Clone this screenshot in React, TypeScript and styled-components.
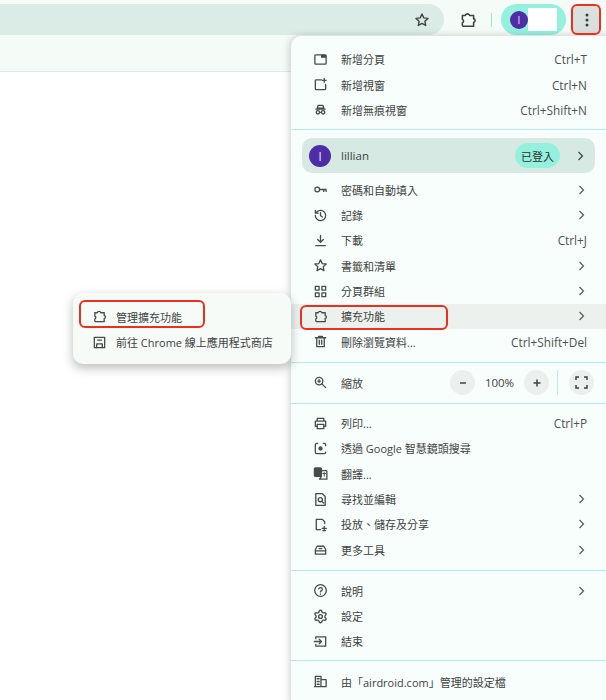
import React from "react";
import styled, { createGlobalStyle } from "styled-components";
import { Settings } from "lucide-react";

const Global = createGlobalStyle`
  html, body { margin: 0; padding: 0; background: #fff; }
  body { font-family: "Open Sans", "Noto Sans CJK TC", sans-serif; }
  #root { width: 606px; height: 700px; overflow: hidden; position: relative; }
`;

const Page = styled.div`
  position: relative;
  width: 606px;
  height: 700px;
  overflow: hidden;
  background: #fff;
`;
const Toolbar = styled.header`
  height: 67px;
  padding-top: 4px;
  background: #f5fbf7;
  border-bottom: 1px solid #dcebe6;
`;
const TopRow = styled.div`
  display: flex;
  align-items: center;
  height: 31px;
`;
const Address = styled.div`
  width: 444px;
  height: 31px;
  flex: none;
  display: flex;
  align-items: center;
  justify-content: flex-end;
  padding-right: 14px;
  box-sizing: border-box;
  background: #dbece7;
  border-radius: 0 16px 16px 0;
  color: #3c4442;
`;
const IconSlot = styled.div`
  width: 24px;
  height: 24px;
  margin-left: 12px;
  display: flex;
  align-items: center;
  justify-content: center;
  color: #3c4442;
`;
const VDivider = styled.div`
  width: 1px;
  height: 14px;
  margin-left: 11px;
  background: #96e8d8;
`;
const Profile = styled.div`
  width: 65px;
  height: 31px;
  margin-left: 9px;
  flex: none;
  display: flex;
  align-items: center;
  padding-left: 9px;
  box-sizing: border-box;
  border-radius: 16px;
  background: #96f0de;
`;
const Avatar = styled.div<{ $size: number }>`
  width: ${(p) => p.$size}px;
  height: ${(p) => p.$size}px;
  flex: none;
  display: flex;
  align-items: center;
  justify-content: center;
  border-radius: 50%;
  background: #4f2da6;
  color: #e6dcf8;
  font-family: "Open Sans", sans-serif;
  font-size: ${(p) => Math.round(p.$size * 0.58)}px;
`;
const Blank = styled.div`
  width: 29px;
  height: 23px;
  background: #fff;
`;
const Kebab = styled.div`
  position: absolute;
  left: 573px;
  top: 5px;
  width: 27px;
  height: 29px;
  display: flex;
  align-items: center;
  justify-content: center;
  background: #d9e0dd;
  border-radius: 3px;
  color: #37403e;
`;
const Mark = styled.div<{ $x: number; $y: number; $w: number; $h: number }>`
  position: absolute;
  left: ${(p) => p.$x}px;
  top: ${(p) => p.$y}px;
  width: ${(p) => p.$w}px;
  height: ${(p) => p.$h}px;
  box-sizing: border-box;
  border: 2px solid #e8321f;
  border-radius: 6px;
  pointer-events: none;
  z-index: 5;
`;
const Menu = styled.nav`
  position: absolute;
  left: 291px;
  top: 36px;
  width: 315px;
  height: 664px;
  overflow: hidden;
  background: #f8fefb;
  border-radius: 10px 0 0 0;
  box-shadow: 0 1px 6px 2px rgba(60, 70, 66, 0.22);
`;
const Group = styled.section<{ $top: number; $bottom: number }>`
  padding: ${(p) => p.$top}px 0 ${(p) => p.$bottom}px;
  border-bottom: 1px solid #aeefe2;
  &:last-child { border-bottom: 0; }
`;
const Row = styled.div<{ $active?: boolean }>`
  display: flex;
  align-items: center;
  height: 25.35px;
  padding: 0 19px 0 21px;
  background: ${(p) => (p.$active ? "#ecf1ee" : "transparent")};
  color: #3d4341;
  font-size: 11px;
`;
const RowIcon = styled.span`
  width: 16px;
  height: 16px;
  flex: none;
  margin-right: 13px;
  display: flex;
  align-items: center;
  justify-content: center;
  color: #454c4a;
`;
const SubIcon = styled(RowIcon)`
  margin-right: 9px;
`;
const Label = styled.span`
  flex: 1;
  white-space: nowrap;
`;
const Shortcut = styled.span`
  white-space: nowrap;
  color: #4a5250;
  font-size: 11.8px;
`;
const Chevron = styled.span`
  width: 10px;
  display: flex;
  justify-content: flex-end;
  margin-right: 2px;
  color: #555c5a;
`;
const ProfileRow = styled.div`
  display: flex;
  align-items: center;
  height: 35px;
  margin: 8px 11px 4px 11px;
  padding: 0 11px 0 7px;
  box-sizing: border-box;
  background: #d6e9e3;
  border-radius: 10px;
  color: #3d4341;
  font-size: 11px;
`;
const ProfileName = styled.span`
  flex: 1;
  margin-left: 10px;
  font-size: 11.5px;
`;
const Badge = styled.span`
  height: 25px;
  padding: 0 6px;
  margin-right: 17px;
  display: flex;
  align-items: center;
  border-radius: 13px;
  background: #96f0de;
  color: #28302e;
`;
const ZoomRow = styled.div`
  display: flex;
  align-items: center;
  height: 40px;
  padding: 0 12px 0 21px;
  color: #3d4341;
  font-size: 11px;
`;
const RoundBtn = styled.span`
  width: 25px;
  height: 25px;
  border-radius: 50%;
  background: #ebefed;
  display: flex;
  align-items: center;
  justify-content: center;
  flex: none;
  color: #3d4341;
`;
const ZoomValue = styled.span`
  width: 49px;
  text-align: center;
  font-size: 11.5px;
`;
const ZoomSep = styled.span`
  width: 1px;
  height: 25px;
  margin: 0 11px 0 8px;
  background: #b5eee2;
`;
const SubMenu = styled.nav`
  position: absolute;
  left: 73px;
  top: 293px;
  width: 218px;
  height: 71px;
  padding-top: 11px;
  box-sizing: border-box;
  background: #f6fbf8;
  border-radius: 10px;
  box-shadow: 0 4px 10px 1px rgba(60, 70, 66, 0.3);
`;
const SubRow = styled.div`
  display: flex;
  align-items: center;
  height: 25.5px;
  padding-left: 18px;
  color: #3d4341;
  font-size: 11px;
  white-space: nowrap;
`;

type P = { children: React.ReactNode; size?: number };
const Ic = ({ children, size = 15 }: P) => (
  <svg width={size} height={size} viewBox="0 0 16 16" fill="none" stroke="currentColor" strokeWidth="1.4" strokeLinecap="round" strokeLinejoin="round">
    {children}
  </svg>
);
const Puzzle = ({ size = 15 }: { size?: number }) => (
  <Ic size={size}>
    <path d="M3 4h2.6c0-1.9 3.8-1.9 3.8 0H13v3c1.8 0 1.8 3 0 3v3.5H3.6l-.6-.6v-2.4c1.4-.3 1.4-2.6 0-2.9z" />
  </Ic>
);
const Star = ({ size = 15 }: { size?: number }) => (
  <Ic size={size}><path d="M8 2l1.8 3.9 4.2.5-3.1 2.9.8 4.2L8 11.4l-3.7 2.1.8-4.2L2 6.4l4.2-.5z" /></Ic>
);
const icons: Record<string, React.ReactNode> = {
  tab: <Ic><rect x="2" y="3" width="12" height="10" rx="1" /><rect x="8.5" y="3" width="5.5" height="3.2" fill="currentColor" stroke="none" /></Ic>,
  win: <Ic><path d="M9 3H3.5a1 1 0 0 0-1 1v8.5a1 1 0 0 0 1 1h9a1 1 0 0 0 1-1V8" /><path d="M12 1.5v4M10 3.5h4" /></Ic>,
  incog: <Ic><path d="M5.5 3.5h5l1 3h-7zM3 7.5h10" /><circle cx="5.2" cy="11" r="1.8" /><circle cx="10.8" cy="11" r="1.8" /><path d="M7 11h2" /></Ic>,
  key: <Ic><circle cx="4.5" cy="8" r="2.5" /><path d="M7 8h7v2M11.5 8v2" /></Ic>,
  hist: <Ic><path d="M2.5 8A5.5 5.5 0 1 0 4.2 4L2.5 5.5M2.5 2.5v3h3" /><path d="M8 5v3l2 1.5" /></Ic>,
  down: <Ic><path d="M8 2.5v7M5 7l3 3 3-3M3 13.5h10" /></Ic>,
  star: <Star />,
  grid: <Ic><rect x="2.5" y="2.5" width="4" height="4" /><rect x="9.5" y="2.5" width="4" height="4" /><rect x="2.5" y="9.5" width="4" height="4" /><rect x="9.5" y="9.5" width="4" height="4" /></Ic>,
  puzzle: <Puzzle />,
  trash: <Ic><path d="M2.5 4h11M6 4V2.5h4V4M4 4v9.5h8V4M6.7 6.5v4.5M9.3 6.5v4.5" /></Ic>,
  zoom: <Ic><circle cx="6.5" cy="6.5" r="4" /><path d="M9.5 9.5l4 4M5 6.5h3M6.5 5v3" /></Ic>,
  print: <Ic><path d="M4.5 5V2.5h7V5M4.5 11H2.5V5.5h11V11h-2" /><rect x="4.5" y="9" width="7" height="4.5" /></Ic>,
  lens: <Ic><path d="M5 2.5H4a1.5 1.5 0 0 0-1.5 1.5v8A1.5 1.5 0 0 0 4 13.5h8a1.5 1.5 0 0 0 1.5-1.5M11 2.5h1A1.5 1.5 0 0 1 13.5 4v1" /><circle cx="8" cy="8" r="1.6" fill="currentColor" /></Ic>,
  trans: <Ic><rect x="1.5" y="2" width="7.5" height="9" rx="1" fill="currentColor" /><path d="M9 5h5a.8.8 0 0 1 .8.8V14H7l2-3" /><path d="M10.5 8h3M12 7v4" strokeWidth="1" /></Ic>,
  edit: <Ic><path d="M3 1.8h7l3 3v9.4H3z" /><circle cx="7.8" cy="8.2" r="2.2" /><path d="M9.5 10l1.8 1.8" /></Ic>,
  cast: <Ic><path d="M12.5 7V5L10 2.5H3.5v11H8" /><path d="M12 10v4.5M9.8 12.2h4.4M10.5 14.5h3" /></Ic>,
  tools: <Ic><path d="M2.5 8l2-3.5h7l2 3.5v5h-11zM2.5 9.5h11M6.5 7h3" /></Ic>,
  help: <Ic><circle cx="8" cy="8" r="6.2" /><path d="M6.2 6.3A1.9 1.9 0 1 1 8 8.7v.8" /><path d="M8 11.6v.1" /></Ic>,
  gear: <Settings size={15} strokeWidth={2.2} />,
  exit: <Ic><path d="M3 5V3h10.5v10H3v-2" /><path d="M1.5 8h7M6.5 5.5L9 8l-2.5 2.5" /></Ic>,
  org: <Ic><path d="M2.5 13.5V2.5h6v11M8.5 6h5.5v7.5H1.5" /><path d="M4.5 5h2M4.5 8h2M4.5 11h2" strokeWidth="1.6" /></Ic>,
  store: <Ic><rect x="2.5" y="2.5" width="11" height="11" /><path d="M5 13.5V9.5h6v4M6 5.5h4" /></Ic>,
};
const Arrow = () => (
  <svg width="7" height="10" viewBox="0 0 7 10" fill="none" stroke="currentColor" strokeWidth="1.2"><path d="M1.5 1l4 4-4 4" /></svg>
);

type Item = { icon: string; label: string; sc?: string; more?: boolean; active?: boolean };
const MenuRow = ({ icon, label, sc, more, active }: Item) => (
  <Row $active={active}>
    <RowIcon>{icons[icon]}</RowIcon>
    <Label>{label}</Label>
    {sc && <Shortcut>{sc}</Shortcut>}
    {more && <Chevron><Arrow /></Chevron>}
  </Row>
);

const g1: Item[] = [
  { icon: "tab", label: "新增分頁", sc: "Ctrl+T" },
  { icon: "win", label: "新增視窗", sc: "Ctrl+N" },
  { icon: "incog", label: "新增無痕視窗", sc: "Ctrl+Shift+N" },
];
const g2: Item[] = [
  { icon: "key", label: "密碼和自動填入", more: true },
  { icon: "hist", label: "記錄", more: true },
  { icon: "down", label: "下載", sc: "Ctrl+J" },
  { icon: "star", label: "書籤和清單", more: true },
  { icon: "grid", label: "分頁群組", more: true },
  { icon: "puzzle", label: "擴充功能", more: true, active: true },
  { icon: "trash", label: "刪除瀏覽資料...", sc: "Ctrl+Shift+Del" },
];
const g4: Item[] = [
  { icon: "print", label: "列印...", sc: "Ctrl+P" },
  { icon: "lens", label: "透過 Google 智慧鏡頭搜尋" },
  { icon: "trans", label: "翻譯..." },
  { icon: "edit", label: "尋找並編輯", more: true },
  { icon: "cast", label: "投放、儲存及分享", more: true },
  { icon: "tools", label: "更多工具", more: true },
];
const g5: Item[] = [
  { icon: "help", label: "說明", more: true },
  { icon: "gear", label: "設定" },
  { icon: "exit", label: "結束" },
];

export default function App() {
  return (
    <Page>
      <Global />
      <Toolbar>
        <TopRow>
          <Address><Star size={16} /></Address>
          <IconSlot><Puzzle size={18} /></IconSlot>
          <VDivider />
          <Profile>
            <Avatar $size={18}>I</Avatar>
            <Blank />
          </Profile>
        </TopRow>
      </Toolbar>
      <Kebab>
        <svg width="4" height="14" viewBox="0 0 4 14" fill="currentColor">
          <circle cx="2" cy="2" r="1.5" /><circle cx="2" cy="7" r="1.5" /><circle cx="2" cy="12" r="1.5" />
        </svg>
      </Kebab>
      <Mark $x={571} $y={4} $w={30} $h={31} />

      <Menu>
        <Group $top={10.5} $bottom={6.5}>
          {g1.map((r) => <MenuRow key={r.label} {...r} />)}
        </Group>
        <Group $top={0} $bottom={7.5}>
          <ProfileRow>
            <Avatar $size={22}>I</Avatar>
            <ProfileName>lillian</ProfileName>
            <Badge>已登入</Badge>
            <Arrow />
          </ProfileRow>
          {g2.map((r) => <MenuRow key={r.label} {...r} />)}
        </Group>
        <Group $top={0} $bottom={0}>
          <ZoomRow>
            <RowIcon>{icons.zoom}</RowIcon>
            <Label>縮放</Label>
            <RoundBtn>
              <svg width="10" height="10" viewBox="0 0 10 10" stroke="currentColor" strokeWidth="1.5"><path d="M2 5h6" /></svg>
            </RoundBtn>
            <ZoomValue>100%</ZoomValue>
            <RoundBtn>
              <svg width="10" height="10" viewBox="0 0 10 10" stroke="currentColor" strokeWidth="1.5"><path d="M1.5 5h7M5 1.5v7" /></svg>
            </RoundBtn>
            <ZoomSep />
            <RoundBtn>
              <svg width="13" height="13" viewBox="0 0 13 13" fill="none" stroke="currentColor" strokeWidth="1.5"><path d="M1 4V1h3M9 1h3v3M12 9v3H9M4 12H1V9" /></svg>
            </RoundBtn>
          </ZoomRow>
        </Group>
        <Group $top={6.5} $bottom={7}>
          {g4.map((r) => <MenuRow key={r.label} {...r} />)}
        </Group>
        <Group $top={7.5} $bottom={6}>
          {g5.map((r) => <MenuRow key={r.label} {...r} />)}
        </Group>
        <Group $top={8} $bottom={0}>
          <MenuRow icon="org" label="由「airdroid.com」管理的設定檔" />
        </Group>
      </Menu>
      <Mark $x={300} $y={305} $w={148} $h={25} />

      <SubMenu>
        <SubRow>
          <SubIcon>{icons.puzzle}</SubIcon>
          <Label>管理擴充功能</Label>
        </SubRow>
        <SubRow>
          <SubIcon>{icons.store}</SubIcon>
          <Label>前往 Chrome 線上應用程式商店</Label>
        </SubRow>
      </SubMenu>
      <Mark $x={79} $y={300} $w={126} $h={28} />
    </Page>
  );
}
